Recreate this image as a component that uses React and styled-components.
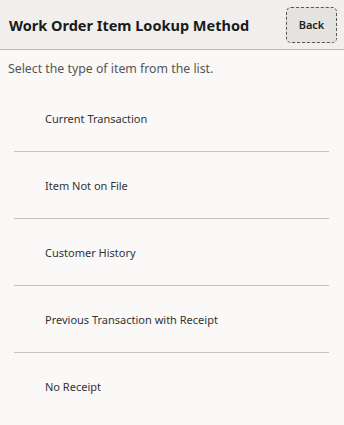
import React from "react";
import styled, { createGlobalStyle } from "styled-components";

const GlobalStyle = createGlobalStyle`
  html, body {
    margin: 0;
    padding: 0;
    background: #faf9f8;
    font-family: "Noto Sans", "Open Sans", sans-serif;
  }
`;

const Page = styled.div`
  width: 344px;
  min-height: 425px;
  background: #faf9f8;
  display: flex;
  flex-direction: column;
`;

const Header = styled.header`
  height: 49px;
  display: flex;
  align-items: center;
  justify-content: space-between;
  padding: 0 7px 0 9px;
  background: #f0efee;
  border-bottom: 1px solid #b9b9b9;
  box-sizing: content-box;
`;

const Title = styled.h1`
  margin: 0;
  font-size: 14.5px;
  font-weight: 700;
  color: #1a1a1a;
`;

const BackButton = styled.button`
  width: 51px;
  height: 36px;
  background: #e4e3e1;
  border: 1px dashed #555;
  border-radius: 5px;
  font-family: inherit;
  font-size: 11px;
  font-weight: 600;
  color: #222;
  padding: 0;
`;

const Hint = styled.p`
  margin: 11px 0 0 8px;
  line-height: 16px;
  font-size: 12.3px;
  color: #555;
`;

const List = styled.ul`
  list-style: none;
  margin: 8px 15px 0 14px;
  padding: 0;
`;

const Item = styled.li`
  height: 66px;
  display: flex;
  align-items: center;
  padding-left: 31px;
  font-size: 11px;
  color: #333;
  border-top: ${(p) => (p.$first ? "none" : "1px solid #c3c3c3")};
`;

const options = [
  "Current Transaction",
  "Item Not on File",
  "Customer History",
  "Previous Transaction with Receipt",
  "No Receipt",
];

export default function App() {
  return (
    <Page>
      <GlobalStyle />
      <Header>
        <Title>Work Order Item Lookup Method</Title>
        <BackButton>Back</BackButton>
      </Header>
      <Hint>Select the type of item from the list.</Hint>
      <List>
        {options.map((label, i) => (
          <Item key={label} $first={i === 0}>
            {label}
          </Item>
        ))}
      </List>
    </Page>
  );
}
